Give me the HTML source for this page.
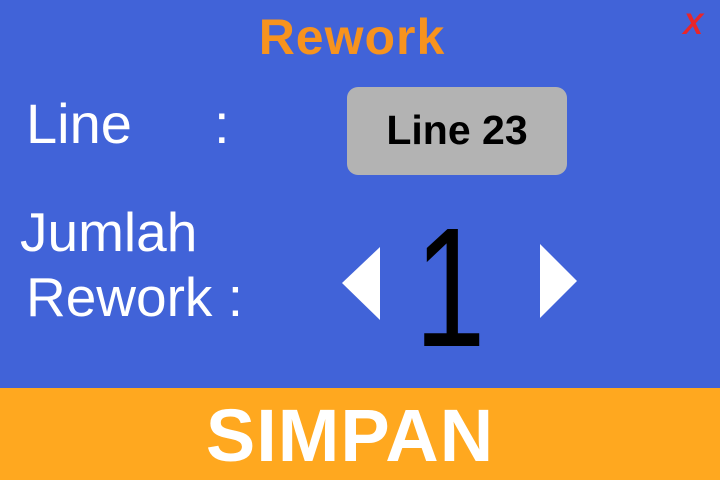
<!DOCTYPE html>
<html><head><style>
html,body{margin:0;padding:0;}
body{width:720px;height:480px;position:relative;overflow:hidden;background:#4163d8;font-family:"Liberation Sans",sans-serif;}
.t{position:absolute;white-space:nowrap;line-height:1;}
</style></head><body>
<div class="t" style="left:0;width:704px;text-align:center;top:12px;font-size:50px;font-weight:bold;color:#f7931e;letter-spacing:1px;">Rework</div>
<div class="t" style="left:683px;top:10px;font-size:30px;font-weight:bold;font-style:italic;color:#e8262a;">X</div>
<div class="t" style="left:26px;top:96px;font-size:56px;color:#fff;">Line</div>
<div class="t" style="left:214px;top:96px;font-size:56px;color:#fff;">:</div>
<div style="position:absolute;left:347px;top:87px;width:220px;height:88px;background:#b3b3b3;border-radius:11px;"></div>
<div class="t" style="left:347px;width:220px;text-align:center;top:110px;font-size:41px;font-weight:bold;color:#000;">Line 23</div>
<div class="t" style="left:20px;top:205px;font-size:55px;color:#fff;">Jumlah</div>
<div class="t" style="left:26px;top:270px;font-size:55px;color:#fff;">Rework :</div>
<svg style="position:absolute;left:0;top:0" width="720" height="480">
<polygon points="380,247 380,320 342,283" fill="#fff"/>
<polygon points="540,244 540,318 577,281" fill="#fff"/>
</svg>
<div class="t" style="left:395px;top:203px;font-size:170px;color:#000;transform:scaleX(0.75);transform-origin:center;width:110px;text-align:center;">1</div>
<div style="position:absolute;left:0;top:388px;width:720px;height:92px;background:#ffa81f;"></div>
<div class="t" style="left:0;width:700px;text-align:center;top:399px;font-size:74px;font-weight:bold;color:#fff;letter-spacing:1px;">SIMPAN</div>
</body></html>
